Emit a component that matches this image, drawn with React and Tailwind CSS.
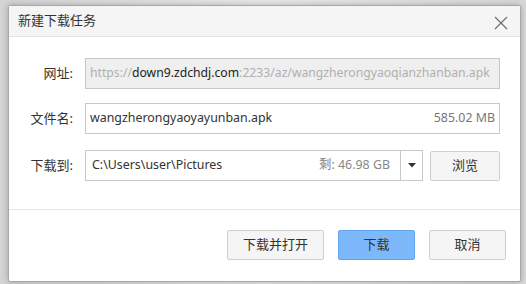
import React from 'react';

const font = { fontFamily: '"Noto Sans", "Noto Sans CJK SC", sans-serif' };

const Field = ({ label, children }) => (
  <div className="flex items-center">
    <div className="w-[64px] shrink-0 text-right text-[13px] text-[#333]">{label}</div>
    <div className="ml-[12px] min-w-0 flex-1">{children}</div>
  </div>
);

const Btn = ({ children, primary, className = '' }) => (
  <button
    className={`h-[30px] rounded-[2px] border text-[13px] text-[#333] ${
      primary ? 'border-[#5fa5ef] bg-[#7db8fa]' : 'border-[#cfcfcf] bg-[#f5f5f5]'
    } ${className}`}
  >
    {children}
  </button>
);

export default function App() {
  return (
    <div
      className="h-[284px] w-[526px] bg-gradient-to-r from-[#d4d4d4] via-[#e9e9e9] to-[#d8d8d8] pl-[8px] pr-[5px] pt-[5px] pb-[2px]"
      style={font}
    >
      <div className="flex h-[277px] flex-col rounded-[2px] border border-[#a8a8a8] bg-white shadow-[0_0_6px_rgba(0,0,0,0.25)]">
        {/* title */}
        <div className="flex h-[31px] items-center justify-between border-b border-[#e3e3e3] bg-[#f5f5f5] pl-[9px] pr-[12px]">
          <span className="text-[13px] text-[#333]">新建下载任务</span>
          <svg width="14" height="14" viewBox="0 0 14 14" className="mt-[4px]">
            <path d="M1 1L13 13M13 1L1 13" stroke="#6a6a6a" strokeWidth="1.1" fill="none" />
          </svg>
        </div>

        {/* body */}
        <div className="flex flex-1 flex-col pr-[20px] pt-[21px]">
          <Field label="网址:">
            <div className="flex h-[31px] items-center overflow-hidden whitespace-nowrap border border-[#c8c8c8] bg-[#efefef] px-[4px] text-[12.2px]">
              <span className="text-[#b0b0b0]">https://</span>
              <span className="text-[#222]">down9.zdchdj.com</span>
              <span className="text-[#b0b0b0]">:2233/az/wangzherongyaoqianzhanban.apk</span>
            </div>
          </Field>
          <div className="mt-[14px]">
            <Field label="文件名:">
              <div className="flex h-[31px] items-center justify-between border border-[#c8c8c8] bg-white px-[4px] text-[12.4px]">
                <span className="text-[#333]">wangzherongyaoyayunban.apk</span>
                <span className="text-[#777]">585.02 MB</span>
              </div>
            </Field>
          </div>
          <div className="mt-[16px]">
            <Field label="下载到:">
              <div className="flex items-center gap-[7px]">
                <div className="flex h-[31px] flex-1 items-stretch border border-[#c8c8c8] bg-white text-[12.4px]">
                  <div className="flex flex-1 items-center justify-between pl-[6px] pr-[10px]">
                    <span className="text-[#333]">C:\Users\user\Pictures</span>
                    <span className="text-[#888]">剩: 46.98 GB</span>
                  </div>
                  <div className="flex w-[22px] items-center justify-center border-l border-[#c8c8c8]">
                    <svg width="8" height="5" viewBox="0 0 8 5">
                      <path d="M0 0H8L4 4.5Z" fill="#333" />
                    </svg>
                  </div>
                </div>
                <Btn className="w-[70px]">浏览</Btn>
              </div>
            </Field>
          </div>
        </div>

        {/* footer */}
        <div className="flex h-[72px] items-start justify-end gap-[14px] border-t border-[#e6e6e6] pr-[14px] pt-[20px]">
          <Btn className="w-[97px]">下载并打开</Btn>
          <Btn primary className="w-[77px]">下载</Btn>
          <Btn className="w-[77px]">取消</Btn>
        </div>
      </div>
    </div>
  );
}
